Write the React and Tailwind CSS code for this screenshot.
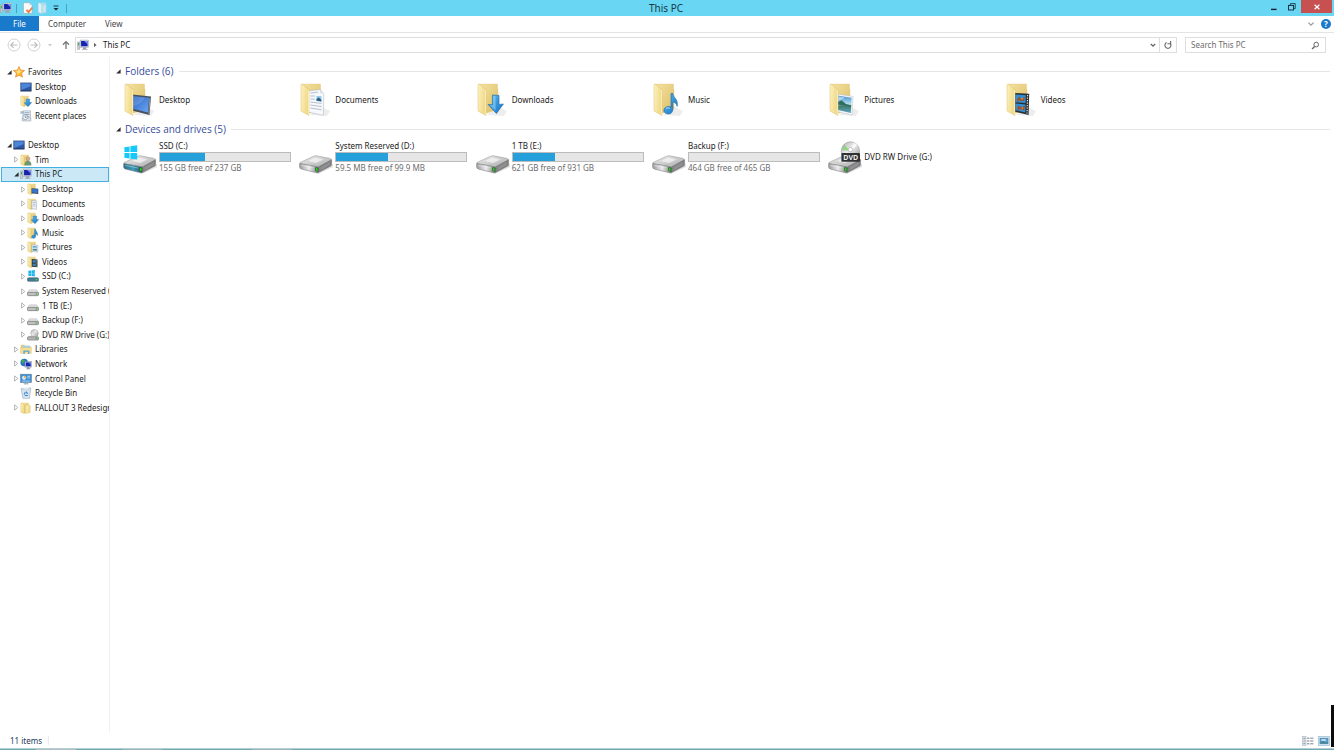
import React from "react";

/* ---------- shared gradients ---------- */

function Gradients() {
  return (
    <svg className="absolute h-0 w-0" aria-hidden="true">
      <defs>
        <linearGradient id="flap" x1="0" y1="0" x2="1" y2="0.3">
          <stop offset="0" stopColor="#fdf2bf" />
          <stop offset="1" stopColor="#efd883" />
        </linearGradient>
        <linearGradient id="back" x1="0" y1="0" x2="1" y2="1">
          <stop offset="0" stopColor="#f5e3a2" />
          <stop offset="1" stopColor="#dcbd66" />
        </linearGradient>
        <linearGradient id="screen" x1="0" y1="0" x2="1" y2="1">
          <stop offset="0" stopColor="#2a63c4" />
          <stop offset="1" stopColor="#6aa6f2" />
        </linearGradient>
        <linearGradient id="arrow" x1="0" y1="0" x2="1" y2="1">
          <stop offset="0" stopColor="#5cbcf2" />
          <stop offset="1" stopColor="#1573c4" />
        </linearGradient>
        <linearGradient id="metalTop" x1="0" y1="0" x2="1" y2="1">
          <stop offset="0" stopColor="#f2f2f2" />
          <stop offset="1" stopColor="#a9a9ab" />
        </linearGradient>
        <linearGradient id="metalFront" x1="0" y1="0" x2="1" y2="0">
          <stop offset="0" stopColor="#9c9c9e" />
          <stop offset="0.5" stopColor="#ececee" />
          <stop offset="1" stopColor="#7c7c7e" />
        </linearGradient>
        <linearGradient id="tealFront" x1="0" y1="0" x2="1" y2="0">
          <stop offset="0" stopColor="#2b6f8c" />
          <stop offset="0.5" stopColor="#3d9cba" />
          <stop offset="1" stopColor="#24566a" />
        </linearGradient>
        <linearGradient id="photo" x1="0" y1="0" x2="0" y2="1">
          <stop offset="0" stopColor="#3e8fd0" />
          <stop offset="0.5" stopColor="#b9dff0" />
          <stop offset="0.6" stopColor="#3f7d6a" />
          <stop offset="1" stopColor="#5fa5c8" />
        </linearGradient>
        <linearGradient id="disc" x1="0" y1="0" x2="1" y2="1">
          <stop offset="0" stopColor="#a8a8aa" />
          <stop offset="0.45" stopColor="#efefef" />
          <stop offset="1" stopColor="#8d8d8f" />
        </linearGradient>
      </defs>
    </svg>
  );
}

/* ---------- large icons (36 x 36) ---------- */

function LargeFolder({ children }) {
  return (
    <svg viewBox="0 0 36 36" className="h-9 w-9 shrink-0" aria-hidden="true">
      <path d="M12 33L29 34L32 29L22 24Z" fill="#000" opacity="0.07" />
      <path d="M4 2H22.5V6L23 8V27L12 31L6 29Z" fill="url(#back)" stroke="#e0c67c" strokeWidth="0.4" />
      {children}
      <path d="M3 2.6L4 2L11 7.4V33.5L3 29Z" fill="url(#flap)" stroke="#dcc070" strokeWidth="0.5" />
      <path d="M10.4 8V32.4" stroke="#fff9dc" strokeWidth="0.7" />
    </svg>
  );
}

const LargeDesktop = () => (
  <LargeFolder>
    <path d="M10 12.5L29 14.5L27.5 33L10 28.4Z" fill="#46505e" />
    <path d="M10 14L27 15.8L25.9 30.4L10 26.6Z" fill="url(#screen)" />
    <path d="M10 14L23 15.4C20 20 17 23 10 24Z" fill="#fff" opacity="0.14" />
    <path d="M27.9 16L26.8 31.6" fill="none" stroke="#b8c2cf" strokeWidth="0.6" />
  </LargeFolder>
);

const LargeDocuments = () => (
  <LargeFolder>
    <path d="M10 9L22 7.5L25.8 11.5L25.4 33.4L10 30Z" fill="#f6f8fb" stroke="#aab2be" strokeWidth="0.5" />
    <path d="M22 7.5L22.4 11L25.8 11.5Z" fill="#d5dbe4" />
    <path d="M12.4 11L20 10.2M12.4 14H17M12.4 17L17 17.2M12.4 20L23.6 21.4M12.4 23L23.6 24.6M12.4 26L23.6 27.8" stroke="#a9b2c2" strokeWidth="0.8" />
    <path d="M18.5 14L23.4 14.3V19.4L18.5 18.8Z" fill="#8cc3ea" />
    <path d="M18.5 17L20.8 15.6L23.4 18V19.4L18.5 18.8Z" fill="#2b5f80" />
  </LargeFolder>
);

const LargeDownloads = () => (
  <LargeFolder>
    <path d="M17.4 13L24 13.4V22.4L28.4 22L21.4 31.6L13 22.4L17.4 22.8Z" fill="url(#arrow)" stroke="#1a66a8" strokeWidth="0.6" />
    <path d="M18 13.8L20.6 14V28.6L15 23.2H18Z" fill="#9edcfb" opacity="0.5" />
  </LargeFolder>
);

const LargeMusic = () => (
  <LargeFolder>
    <path d="M20 11.5L21.8 11.5C22.2 16 27.4 16.5 26.2 24.4C25.4 21.5 24 20.5 21.8 20V27.5C21.8 31 18.5 33 15.2 31.5C11.5 30 12.5 25.3 16.6 24.6C18 24.4 19.2 24.6 20 25Z" fill="url(#arrow)" stroke="#1a66a8" strokeWidth="0.6" />
    <path d="M15 26.4C16.4 25.6 18 25.8 19 26.6" stroke="#b9e6fc" strokeWidth="1" fill="none" />
  </LargeFolder>
);

const LargePictures = () => (
  <LargeFolder>
    <path d="M10 12L26 14.4L25 33L10 29.5Z" fill="#f4f6f8" stroke="#b8bec6" strokeWidth="0.5" />
    <path d="M10 13.4L24.6 15.8L23.8 31L10 27.8Z" fill="url(#photo)" />
    <path d="M10 20.5L14.5 18.2L19 22L24.2 23.4L24.1 24.8L10 22.6Z" fill="#2f6f62" />
    <path d="M11 14.2L18 15.4L14 18L11 18Z" fill="#fff" opacity="0.45" />
  </LargeFolder>
);

const LargeVideos = () => (
  <LargeFolder>
    <path d="M10 11L25.2 11.8L24.6 33L10 29.5Z" fill="#2d2f33" />
    <path d="M11.4 12.5L21.8 13.3L21.5 21L11.4 20.2Z" fill="#2f8fd6" />
    <path d="M11.4 21.4L21.5 22.4L21.3 30.4L11.4 28.2Z" fill="#2f8fd6" />
    <path d="M13 17L15.5 14.5L17 17L21 14.5L20 19L16 18.5L13.5 20Z" fill="#a0502a" />
    <path d="M13 26.5L14.5 23.5L17.5 25.5L21 23.6L20 28.5L16 27L14 28.4Z" fill="#a0502a" />
    <path d="M17 16.3L19.2 16L18.2 17.8Z" fill="#f0a532" />
    <path d="M17.4 25.8L19.4 25.6L18.4 27.4Z" fill="#f0a532" />
    <path d="M23.6 13L23 31.4" stroke="#f0f0f0" strokeWidth="1.1" strokeDasharray="1.2 1.3" />
  </LargeFolder>
);

function DriveBody({ front = "url(#metalFront)" }) {
  return (
    <g>
      <path d="M3 30L20 35L35 28V25L20 32Z" fill="#000" opacity="0.12" />
      <path d="M2.2 23.5L15.6 17.2Q17 16.6 18.6 16.8L32 19.4Q33.8 20.2 33.4 21L20.4 28L3 25Q1.6 24.4 2.2 23.5Z" fill="url(#metalTop)" stroke="#8b8b8d" strokeWidth="0.5" />
      <path d="M10 22L17 18.8L25.4 20.4L18 24Z" fill="#fff" opacity="0.6" />
      <path d="M1.6 24.4L20.4 28V33.6Q19.4 33.9 18 33.5L3.2 30Q1.6 29.4 1.6 28Z" fill={front} stroke="#77777a" strokeWidth="0.5" />
      <path d="M20.4 28L33.6 20.8V25.4Q33.6 26.6 32.4 27.2L20.4 33.6Z" fill="#7f7f82" stroke="#646466" strokeWidth="0.4" />
      <path d="M17.5 28.6L20 29V32.4L17.5 31.8Z" fill="#35d02c" stroke="#1d4f1a" strokeWidth="0.6" />
      <path d="M22.4 29L31.8 23.8M22.4 30.6L31.8 25.4" stroke="#b2b2b4" strokeWidth="0.5" />
      <path d="M3.2 26.4L16 29" stroke="#fff" opacity="0.5" strokeWidth="0.7" />
    </g>
  );
}

const LargeDrive = () => (
  <svg viewBox="0 0 36 36" className="h-9 w-9 shrink-0" aria-hidden="true">
    <DriveBody />
  </svg>
);

const LargeSystemDrive = () => (
  <svg viewBox="0 0 36 36" className="h-9 w-9 shrink-0" aria-hidden="true">
    <DriveBody front="url(#tealFront)" />
    <path d="M2.4 8.2L7.6 7.4V13.1H2.4ZM8.4 7.3L15.2 6.3V13.1H8.4ZM2.4 13.9H7.6V19.6L2.4 18.8ZM8.4 13.9H15.2V20.6L8.4 19.7Z" fill="#17c9fa" />
  </svg>
);

const LargeDvd = () => (
  <svg viewBox="0 0 36 36" className="h-9 w-9 shrink-0" aria-hidden="true">
    <DriveBody />
    <circle cx="23.4" cy="12" r="9.2" fill="url(#disc)" stroke="#8d8d8f" strokeWidth="0.5" />
    <path d="M23.4 12L14.6 11L17 5.6Z" fill="#7fd06a" opacity="0.75" />
    <path d="M23.4 12L27 3.5L30.4 6Z" fill="#fff" opacity="0.7" />
    <circle cx="23.4" cy="10.6" r="2.2" fill="#fff" stroke="#a2a2a4" strokeWidth="0.6" />
    <rect x="14.4" y="14" width="18.6" height="8.8" rx="0.8" fill="#303133" />
    <text x="23.7" y="20.8" textAnchor="middle" fontSize="7" fontWeight="700" fill="#ececec" fontFamily="Noto Sans, sans-serif">
      DVD
    </text>
  </svg>
);

/* ---------- small icons (16 x 16 grid) ---------- */

function Small({ children }) {
  return (
    <svg viewBox="0 0 16 16" className="h-3 w-3 shrink-0" aria-hidden="true">
      {children}
    </svg>
  );
}

function SmallFolder({ children }) {
  return (
    <Small>
      <path d="M3 1H11.5V13L6 15L3 14Z" fill="url(#back)" />
      <path d="M1 1.5L2.6 1L6 3.5V15.5L1 13.5Z" fill="url(#flap)" stroke="#d8b85e" strokeWidth="0.5" />
      {children}
    </Small>
  );
}

const StarIcon = () => (
  <Small>
    <path d="M8 0.8L10.2 5.5L15.4 6.1L11.5 9.6L12.6 14.9L8 12.2L3.4 14.9L4.5 9.6L0.6 6.1L5.8 5.5Z" fill="#fbb829" stroke="#e8832a" strokeWidth="0.9" />
    <path d="M8 3L9.2 6.6L12 7L8 9.5L5 12L6 9L3.4 7L6.6 6.6Z" fill="#fde08a" />
  </Small>
);

const MonitorIcon = () => (
  <Small>
    <rect x="0.8" y="2.5" width="14.4" height="11" fill="#2c56a0" stroke="#5f7090" strokeWidth="0.8" />
    <path d="M1.8 3.4H14V7L1.8 12Z" fill="#4c86d8" />
    <path d="M1.2 13H14.8" stroke="#1c3158" strokeWidth="1" />
  </Small>
);

const PcIcon = () => (
  <Small>
    <rect x="0.6" y="4" width="3.2" height="10" fill="#c9cdd2" stroke="#8b9097" strokeWidth="0.5" />
    <rect x="1.3" y="5.5" width="1.4" height="3" fill="#38b24a" />
    <rect x="4.2" y="1.4" width="11.2" height="9.6" fill="#e6e9ef" stroke="#8d94a3" strokeWidth="0.6" />
    <rect x="5.4" y="2.6" width="8.8" height="7.2" fill="#1624ae" />
    <path d="M9.6 2.6H14.2V7Z" fill="#7d9cf2" />
    <path d="M8 11H12V12.6L14.8 14.4H6L8 12.6Z" fill="#9ea4ad" />
  </Small>
);

const RecentIcon = () => (
  <Small>
    <path d="M4 1H14V12H4Z" fill="#dfe7ef" stroke="#9aa6b4" strokeWidth="0.7" />
    <path d="M6 3.5H12.5M6 6H12.5M8 8.5H12.5" stroke="#7d93ad" strokeWidth="0.9" />
    <rect x="0.6" y="1.6" width="4.8" height="3.4" fill="#a7bccd" />
    <path d="M3 10.6H14.4V14.6H3Z" fill="#e3e7eb" stroke="#8996a3" strokeWidth="0.7" />
    <circle cx="7" cy="9.6" r="3.4" fill="#eef2f6" stroke="#7e8b99" strokeWidth="0.8" />
    <path d="M7 7.6V9.8H9" fill="none" stroke="#3f6186" strokeWidth="0.8" />
  </Small>
);

const SmallDesktop = () => (
  <SmallFolder>
    <path d="M6 7L15 7.6V14.6L6 13.6Z" fill="#2f4468" />
    <path d="M6.8 8L14.2 8.4V13.4L6.8 12.6Z" fill="#3474d2" />
  </SmallFolder>
);
const SmallDocuments = () => (
  <SmallFolder>
    <path d="M6.4 3.4L12.6 3.8V15L6.4 14.4Z" fill="#f1f4f8" stroke="#98a2b0" strokeWidth="0.7" />
    <path d="M7.8 6H11.4M7.8 8.4H11.4M7.8 10.8H11.4" stroke="#8b9cb5" strokeWidth="0.8" />
  </SmallFolder>
);
const SmallDownloads = () => (
  <SmallFolder>
    <path d="M8.2 5.4H12.8V10H15.6L10.6 15.6L5.6 10.4H8.2Z" fill="url(#arrow)" stroke="#1a66a8" strokeWidth="0.5" />
  </SmallFolder>
);
const SmallMusic = () => (
  <SmallFolder>
    <path d="M10 3H11.4C11.6 6 15 7 13.8 11.4C13.2 9.6 12.4 9.2 11.4 9V12.8C11.4 15.6 6.2 15.8 6.2 13.2C6.2 11 9 10.4 10 11Z" fill="url(#arrow)" stroke="#1a66a8" strokeWidth="0.5" />
  </SmallFolder>
);
const SmallPictures = () => (
  <SmallFolder>
    <path d="M6.4 5L14.4 5.6V14.8L6.4 14Z" fill="#eef2f5" stroke="#8d9aaa" strokeWidth="0.6" />
    <path d="M7.6 6.6L13.2 7V13.4L7.6 12.8Z" fill="url(#photo)" />
  </SmallFolder>
);
const SmallVideos = () => (
  <SmallFolder>
    <path d="M6.4 4L14 4.6V15L6.4 14.4Z" fill="#2d3238" />
    <path d="M7.4 5.4L11.8 5.8V9.2L7.4 8.8ZM7.4 10L11.8 10.4V13.6L7.4 13.2Z" fill="#3f83b2" />
    <path d="M13 5.4V14.4" stroke="#eee" strokeWidth="0.8" strokeDasharray="1 1" />
  </SmallFolder>
);
const UserFolder = () => (
  <SmallFolder>
    <circle cx="10.6" cy="6.2" r="2.6" fill="#d9b08a" stroke="#8c6b4c" strokeWidth="0.5" />
    <path d="M6.4 15C6.2 10.8 8 9.4 10.6 9.4S15 10.8 14.8 15Z" fill="#6b9a78" stroke="#43683d" strokeWidth="0.4" />
  </SmallFolder>
);
const PlainFolder = () => (
  <SmallFolder>
    <path d="M7.4 5L11.5 3.6L13.6 5V14L7.4 15.4Z" fill="url(#flap)" stroke="#d8b85e" strokeWidth="0.5" />
  </SmallFolder>
);
const SmallDrive = () => (
  <Small>
    <path d="M3.2 6.4H12.8L15.2 10H0.8Z" fill="#e2e2e3" stroke="#b0b0b2" strokeWidth="0.6" />
    <rect x="0.7" y="9.8" width="14.6" height="4.4" rx="1" fill="#c0c0c2" stroke="#707073" strokeWidth="0.9" />
    <rect x="11.4" y="11.2" width="2.4" height="1.6" fill="#32b82a" />
  </Small>
);
const SmallSystemDrive = () => (
  <Small>
    <path d="M1.8 1.1L5.4 0.7V4.2H1.8ZM6 0.6L10.4 0V4.2H6ZM1.8 4.8H5.4V8L1.8 7.6ZM6 4.8H10.4V8.8L6 8.1Z" fill="#17b5ee" />
    <path d="M3 9.2H13L15.2 11H0.8Z" fill="#c9cdd0" />
    <rect x="0.7" y="10.6" width="14.6" height="4.4" rx="1" fill="#3c7f9c" stroke="#4d5a62" strokeWidth="0.8" />
    <rect x="11.4" y="12" width="2.4" height="1.6" fill="#4ed446" />
  </Small>
);
const SmallDvd = () => (
  <Small>
    <circle cx="10" cy="5.6" r="5" fill="url(#disc)" stroke="#8d8d8f" strokeWidth="0.5" />
    <circle cx="10" cy="5.4" r="1.4" fill="#fff" stroke="#999" strokeWidth="0.5" />
    <path d="M3 9H13L15.2 11H0.8Z" fill="#d5d5d7" />
    <rect x="0.7" y="10.4" width="14.6" height="4.4" rx="1" fill="#b4b4b7" stroke="#6f6f72" strokeWidth="0.8" />
    <rect x="11.4" y="11.8" width="2.4" height="1.6" fill="#32b82a" />
  </Small>
);
const LibrariesIcon = () => (
  <Small>
    <path d="M1 2.4H6L7 4H14V13H1Z" fill="#e9ca6c" />
    <path d="M3 3.4H13.4V7H3Z" fill="#a8d0ec" />
    <path d="M0.8 6.2H12.4L15.2 5.4V13.8H0.8Z" fill="#f6df92" stroke="#d8b95c" strokeWidth="0.5" />
    <path d="M5.4 14.6V10.8H11.6V14.6" fill="none" stroke="#5ba3dc" strokeWidth="1.8" />
  </Small>
);
const NetworkIcon = () => (
  <Small>
    <circle cx="5.6" cy="6" r="5" fill="#2472c8" />
    <path d="M2 3C4 1 6 2 6.4 3.4C6 5.4 4 5 4.4 7.4C3 7.6 1.4 5.6 2 3Z" fill="#42b04a" />
    <rect x="6.6" y="4.8" width="8.8" height="7.4" fill="#dfe3ea" stroke="#68738a" strokeWidth="0.6" />
    <rect x="7.6" y="5.8" width="6.8" height="5.4" fill="#1424b4" />
    <path d="M10.6 5.8H14.4V9Z" fill="#5f86ee" />
    <path d="M9.4 12.2H12.6V13.4L14.4 15H8L9.4 13.4Z" fill="#8d95a2" />
  </Small>
);
const ControlPanelIcon = () => (
  <Small>
    <rect x="0.8" y="1.6" width="14.4" height="11" fill="#3f90d6" stroke="#5d7d9c" strokeWidth="0.8" />
    <circle cx="5.4" cy="6.4" r="2.8" fill="#cfe6f8" />
    <path d="M5.4 6.4V3.6A2.8 2.8 0 0 1 8.2 6.4Z" fill="#f5a83a" />
    <path d="M9.6 4.4H13.4M9.6 6.6H13.4M3 10.8H13.4" stroke="#e4f3fd" strokeWidth="0.9" />
    <path d="M5 14.4H11" stroke="#8b9dae" strokeWidth="1.4" />
  </Small>
);
const RecycleIcon = () => (
  <Small>
    <path d="M1.6 2.2L14.4 1.4L12.6 15H3.8Z" fill="#d7e5f0" stroke="#93a7b9" strokeWidth="0.8" />
    <path d="M1.6 2.2L8 4.2L14.4 1.4" fill="#f6fafc" stroke="#93a7b9" strokeWidth="0.6" />
    <path d="M8 6.2L10.2 9.2M10.4 11.4H6.4M5.6 10L7 7" stroke="#3a7fd0" strokeWidth="1.4" fill="none" />
  </Small>
);

/* ---------- arrows and window glyphs ---------- */

function Twisty({ state }) {
  return (
    <svg viewBox="0 0 7 7" className="h-[7px] w-[7px] shrink-0" aria-hidden="true">
      {state === "open" && <path d="M5.6 1.2V5.6H1.2Z" fill="#2b2b2b" />}
      {state === "closed" && <path d="M1.6 0.9L4.8 3.5L1.6 6.1Z" fill="#fff" stroke="#a3a3a3" strokeWidth="0.8" />}
    </svg>
  );
}

const indents = ["pl-[5px]", "pl-[12px]", "pl-[19px]"];

function TreeRow({ level, state, Icon, label, selected }) {
  return (
    <li className="min-h-0 min-w-0">
      <a
        href="#"
        aria-current={selected ? "true" : undefined}
        className={
          "flex h-full items-center overflow-hidden whitespace-nowrap " +
          indents[level] +
          (selected ? " bg-[#cbe8f6] outline outline-1 -outline-offset-1 outline-[#42b0e0]" : "")
        }
      >
        <Twisty state={state} />
        <span className="flex items-center gap-[3px]">
          <Icon />
          {label}
        </span>
      </a>
    </li>
  );
}

const favorites = [
  { level: 0, state: "open", Icon: StarIcon, label: "Favorites" },
  { level: 1, Icon: MonitorIcon, label: "Desktop" },
  { level: 1, Icon: SmallDownloads, label: "Downloads" },
  { level: 1, Icon: RecentIcon, label: "Recent places" },
];

const tree = [
  { level: 0, state: "open", Icon: MonitorIcon, label: "Desktop" },
  { level: 1, state: "closed", Icon: UserFolder, label: "Tim" },
  { level: 1, state: "open", Icon: PcIcon, label: "This PC", selected: true },
  { level: 2, state: "closed", Icon: SmallDesktop, label: "Desktop" },
  { level: 2, state: "closed", Icon: SmallDocuments, label: "Documents" },
  { level: 2, state: "closed", Icon: SmallDownloads, label: "Downloads" },
  { level: 2, state: "closed", Icon: SmallMusic, label: "Music" },
  { level: 2, state: "closed", Icon: SmallPictures, label: "Pictures" },
  { level: 2, state: "closed", Icon: SmallVideos, label: "Videos" },
  { level: 2, state: "closed", Icon: SmallSystemDrive, label: "SSD (C:)" },
  { level: 2, state: "closed", Icon: SmallDrive, label: "System Reserved (D:)" },
  { level: 2, state: "closed", Icon: SmallDrive, label: "1 TB (E:)" },
  { level: 2, state: "closed", Icon: SmallDrive, label: "Backup (F:)" },
  { level: 2, state: "closed", Icon: SmallDvd, label: "DVD RW Drive (G:)" },
  { level: 1, state: "closed", Icon: LibrariesIcon, label: "Libraries" },
  { level: 1, state: "closed", Icon: NetworkIcon, label: "Network" },
  { level: 1, state: "closed", Icon: ControlPanelIcon, label: "Control Panel" },
  { level: 1, Icon: RecycleIcon, label: "Recycle Bin" },
  { level: 1, state: "closed", Icon: PlainFolder, label: "FALLOUT 3 Redesigned" },
];

const folders = [
  { label: "Desktop", Icon: LargeDesktop },
  { label: "Documents", Icon: LargeDocuments },
  { label: "Downloads", Icon: LargeDownloads },
  { label: "Music", Icon: LargeMusic },
  { label: "Pictures", Icon: LargePictures },
  { label: "Videos", Icon: LargeVideos },
];

const drives = [
  { label: "SSD (C:)", Icon: LargeSystemDrive, used: 34.5, free: "155 GB free of 237 GB" },
  { label: "System Reserved (D:)", Icon: LargeDrive, used: 39.5, free: "59.5 MB free of 99.9 MB" },
  { label: "1 TB (E:)", Icon: LargeDrive, used: 32.5, free: "621 GB free of 931 GB" },
  { label: "Backup (F:)", Icon: LargeDrive, used: 0, free: "464 GB free of 465 GB" },
  { label: "DVD RW Drive (G:)", Icon: LargeDvd },
];

/* ---------- window regions ---------- */

function TitleBar() {
  return (
    <header className="grid h-4 grid-cols-[1fr_auto_1fr] items-start bg-[#69d6f4] pr-[2px]">
      <div className="flex h-4 items-center">
        <PcIcon />
        <span className="ml-1 h-[9px] w-px bg-[#4aa3bd]" />
        <button aria-label="Properties" className="ml-[5px]">
          <svg viewBox="0 0 16 16" className="h-3 w-3">
            <path d="M2 1H10L13.4 4.4V15H2Z" fill="#fbfbfb" stroke="#a7a7a7" strokeWidth="0.8" />
            <path d="M10 1V4.4H13.4Z" fill="#d5d5d5" />
            <path d="M6 10.4L8.8 13.6L13.8 7.4" fill="none" stroke="#ee7a43" strokeWidth="2.4" />
          </svg>
        </button>
        <button aria-label="New folder" className="ml-[3px]">
          <svg viewBox="0 0 16 16" className="h-3 w-3">
            <path d="M3 1H12V14L6 15.4L3 14Z" fill="#b4dcea" />
            <path d="M1.6 1.6L3 1L6.2 3.4V15.6L1.6 13.6Z" fill="#e2f1f7" stroke="#9dcbdc" strokeWidth="0.5" />
            <path d="M7 4L12.4 3.6V14L7 15Z" fill="#c6e5f0" stroke="#9dcbdc" strokeWidth="0.5" />
          </svg>
        </button>
        <button aria-label="Customize Quick Access Toolbar" className="ml-[3px]">
          <svg viewBox="0 0 8 8" className="h-2 w-2">
            <path d="M1.5 2H6.5" stroke="#1f3d46" strokeWidth="1" />
            <path d="M1.5 4H6.5L4 6.6Z" fill="#10262d" />
          </svg>
        </button>
        <span className="ml-[6px] h-[9px] w-px bg-[#4aa3bd]" />
      </div>
      <h1 className="text-[10px] leading-4 text-[#173a45]">This PC</h1>
      <div className="flex items-start justify-end">
        <button aria-label="Minimize" className="flex h-[13px] w-[18px] items-center justify-center">
          <svg viewBox="0 0 10 10" className="h-[10px] w-[10px]">
            <path d="M2 7.4H7.6" stroke="#123" strokeWidth="1.4" />
          </svg>
        </button>
        <button aria-label="Restore" className="flex h-[13px] w-[18px] items-center justify-center">
          <svg viewBox="0 0 10 10" className="h-[10px] w-[10px]">
            <path d="M3.4 3V1.6H8.2V6.6H7" fill="none" stroke="#1d3b45" strokeWidth="0.9" />
            <rect x="1.5" y="3.4" width="5" height="4.6" fill="none" stroke="#123" strokeWidth="0.9" />
          </svg>
        </button>
        <button aria-label="Close" className="flex h-[13px] w-[31px] items-center justify-center bg-[#c75050]">
          <svg viewBox="0 0 8 8" className="h-2 w-2">
            <path d="M1.6 1.8L6.4 6.2M6.4 1.8L1.6 6.2" stroke="#fff" strokeWidth="1.2" />
          </svg>
        </button>
      </div>
    </header>
  );
}

function RibbonTabs() {
  return (
    <nav className="flex h-[17px] items-stretch border-b border-[#e3e4e8] bg-white text-[#444]">
      <button className="mb-px w-[39px] bg-[#1979ca] text-white">File</button>
      <button className="px-[9px]">Computer</button>
      <button className="px-[10px]">View</button>
      <div className="ml-auto flex items-center gap-[6px] pr-[3px]">
        <button aria-label="Expand the Ribbon">
          <svg viewBox="0 0 8 8" className="h-2 w-2">
            <path d="M1.4 2.6L4 5.2L6.6 2.6" fill="none" stroke="#9a9a9a" strokeWidth="1.3" />
          </svg>
        </button>
        <button aria-label="Help" className="flex h-[10px] w-[10px] items-center justify-center rounded-full bg-[#1979ca] text-[8px] leading-none font-bold text-white">
          ?
        </button>
      </div>
    </nav>
  );
}

function CircleArrow({ label, path }) {
  return (
    <button aria-label={label}>
      <svg viewBox="0 0 14 14" className="h-[14px] w-[14px]">
        <circle cx="7" cy="7" r="6" fill="#fff" stroke="#cdcdcd" strokeWidth="0.9" />
        <path d={path} fill="none" stroke="#bdbdbd" strokeWidth="1.2" />
      </svg>
    </button>
  );
}

function AddressBar() {
  return (
    <div className="flex h-6 items-center pr-2 pl-[7px]">
      <CircleArrow label="Back" path="M10.4 7H4M6.6 4.2L3.8 7L6.6 9.8" />
      <span className="w-[6px]" />
      <CircleArrow label="Forward" path="M3.6 7H10M7.4 4.2L10.2 7L7.4 9.8" />
      <button aria-label="Recent locations" className="ml-[5px]">
        <svg viewBox="0 0 8 8" className="h-2 w-2">
          <path d="M1.8 3H6.2L4 5.4Z" fill="#cfcfcf" />
        </svg>
      </button>
      <button aria-label="Up" className="ml-[7px]">
        <svg viewBox="0 0 10 10" className="h-[10px] w-[10px]">
          <path d="M5 9V1.8M2 4.8L5 1.6L8 4.8" fill="none" stroke="#777" strokeWidth="1.3" />
        </svg>
      </button>
      <div className="ml-[4px] flex h-4 flex-1 items-center border border-[#dedede] pl-px">
        <PcIcon />
        <svg viewBox="0 0 6 6" className="ml-[3px] h-[6px] w-[6px]" aria-hidden="true">
          <path d="M2 0.8L4.6 3L2 5.2Z" fill="#666" />
        </svg>
        <span className="ml-[5px]">This PC</span>
        <button aria-label="Previous locations" className="ml-auto px-[2px]">
          <svg viewBox="0 0 8 8" className="h-2 w-2">
            <path d="M1.8 3L4 5.2L6.2 3" fill="none" stroke="#666" strokeWidth="1.3" />
          </svg>
        </button>
        <button aria-label="Refresh" className="flex h-full w-[17px] items-center justify-center border-l border-[#dedede]">
          <svg viewBox="0 0 10 10" className="h-[10px] w-[10px]">
            <path d="M3.6 2.6A3 3 0 1 0 7.4 3.6" fill="none" stroke="#666" strokeWidth="1.1" />
            <path d="M4.4 3.8H7.6V1" fill="none" stroke="#666" strokeWidth="1.1" />
          </svg>
        </button>
      </div>
      <label className="ml-2 flex h-4 w-[141px] items-center border border-[#dedede] pr-[5px] pl-[5px]">
        <input
          type="text"
          aria-label="Search This PC"
          placeholder="Search This PC"
          className="min-w-0 flex-1 bg-transparent outline-none placeholder:text-[#6d6d6d]"
        />
        <svg viewBox="0 0 10 10" className="h-[9px] w-[9px]" aria-hidden="true">
          <circle cx="5.8" cy="4" r="2.6" fill="none" stroke="#666" strokeWidth="1.1" />
          <path d="M4 6L1.2 8.8" stroke="#666" strokeWidth="1.5" />
        </svg>
      </label>
    </div>
  );
}

function GroupHeader({ children }) {
  return (
    <div className="flex h-[14px] items-center gap-[5px]">
      <h2 className="flex items-center gap-[3px] font-['Open_Sans','Noto_Sans',sans-serif] text-[10px] leading-[14px] text-[#364c9b]">
        <Twisty state="open" />
        {children}
      </h2>
      <span className="h-px flex-1 bg-[#e6e6e6]" />
    </div>
  );
}

function Content() {
  return (
    <main className="min-w-0 flex-1 pt-[7px] pr-1 pl-[5px]">
      <section>
        <GroupHeader>Folders (6)</GroupHeader>
        <ul className="grid max-w-[1065px] grid-cols-6 pt-1 pl-[7px]">
          {folders.map(({ label, Icon }) => (
            <li key={label}>
              <a href="#" className="flex h-9 items-center gap-px">
                <Icon />
                {label}
              </a>
            </li>
          ))}
        </ul>
      </section>
      <section className="pt-1">
        <GroupHeader>Devices and drives (5)</GroupHeader>
        <ul className="grid max-w-[1065px] grid-cols-6 pt-[3px] pl-[7px]">
          {drives.map(({ label, Icon, used, free }) => (
            <li key={label}>
              <a href="#" className="flex h-9 items-center gap-px">
                <Icon />
                {free ? (
                  <span className="w-[132px]">
                    <span className="block leading-[11px]">{label}</span>
                    <span className="mt-px block h-[10px] border border-[#bcbcbc] bg-[#e6e6e6]">
                      <span className="block h-full bg-[#26a0da]" style={{ width: `${used}%` }} />
                    </span>
                    <span className="block leading-3 text-[#6d6d6d]">{free}</span>
                  </span>
                ) : (
                  label
                )}
              </a>
            </li>
          ))}
        </ul>
      </section>
    </main>
  );
}

function StatusBar() {
  return (
    <footer className="flex h-[15px] items-center pr-[4px] pl-[10px] text-[#1e395b]">
      <span>11 items</span>
      <span className="ml-[6px] h-[9px] w-px bg-[#ececec]" />
      <div className="ml-auto flex items-center gap-[4px]">
        <button aria-label="Details view">
          <svg viewBox="0 0 12 10" className="h-[10px] w-3">
            <rect x="0.6" y="0.6" width="3.4" height="8.8" fill="#dbe4ea" stroke="#a4b4be" strokeWidth="0.6" />
            <path d="M1.4 2.4H3.2M1.4 7.6H3.2" stroke="#7d9db8" strokeWidth="1" />
            <path d="M1.4 5H3.2" stroke="#d48a7c" strokeWidth="1" />
            <path d="M5 2.2H7.4M8.2 2.2H11.4M5 5H7.4M8.2 5H11.4M5 7.8H7.4M8.2 7.8H11.4" stroke="#66737d" strokeWidth="0.9" />
          </svg>
        </button>
        <button aria-label="Large icons view">
          <svg viewBox="0 0 12 10" className="h-[10px] w-3">
            <rect x="0.5" y="0.5" width="11" height="9" fill="#d9edf7" stroke="#9cc4d8" strokeWidth="0.8" />
            <rect x="2" y="2.2" width="8" height="5.6" fill="#5aa6dc" stroke="#50708a" strokeWidth="0.6" />
            <path d="M2.4 7.4V6L5 5L9.6 6.6V7.4Z" fill="#3f8a94" />
            <path d="M3.4 4H7.8" stroke="#fff" strokeWidth="1.2" />
          </svg>
        </button>
      </div>
    </footer>
  );
}

function TaskbarEdge() {
  return (
    <div className="flex h-[2px] border-t border-[#b5cfd5] bg-[#6fa9b1]">
      <span className="ml-[36px] w-10 bg-[#b3bdc0]" />
      <span className="ml-[46px] w-10 bg-[#9db5ba]" />
      <span className="ml-[90px] w-10 bg-[#9db5ba]" />
    </div>
  );
}

export default function App() {
  return (
    <div className="relative flex h-screen flex-col overflow-hidden bg-white font-['Noto_Sans','Open_Sans',sans-serif] text-[8px] leading-3 text-[#1a1a1a]">
      <Gradients />
      <TitleBar />
      <RibbonTabs />
      <AddressBar />
      <div className="flex min-h-0 flex-1">
        <aside className="w-[110px] shrink-0 overflow-hidden border-r border-[#f1f1f1] pt-2 pl-px">
          <ul className="grid h-[58px] auto-rows-fr grid-cols-1">
            {favorites.map((row) => (
              <TreeRow key={row.label} {...row} />
            ))}
          </ul>
          <ul className="mt-[15px] grid h-[277px] auto-rows-fr grid-cols-1">
            {tree.map((row) => (
              <TreeRow key={row.level + row.label} {...row} />
            ))}
          </ul>
        </aside>
        <Content />
      </div>
      <StatusBar />
      <TaskbarEdge />
      <div className="absolute right-0 bottom-[3px] h-[42px] w-[3px] bg-[#0c0c0c]" />
    </div>
  );
}
